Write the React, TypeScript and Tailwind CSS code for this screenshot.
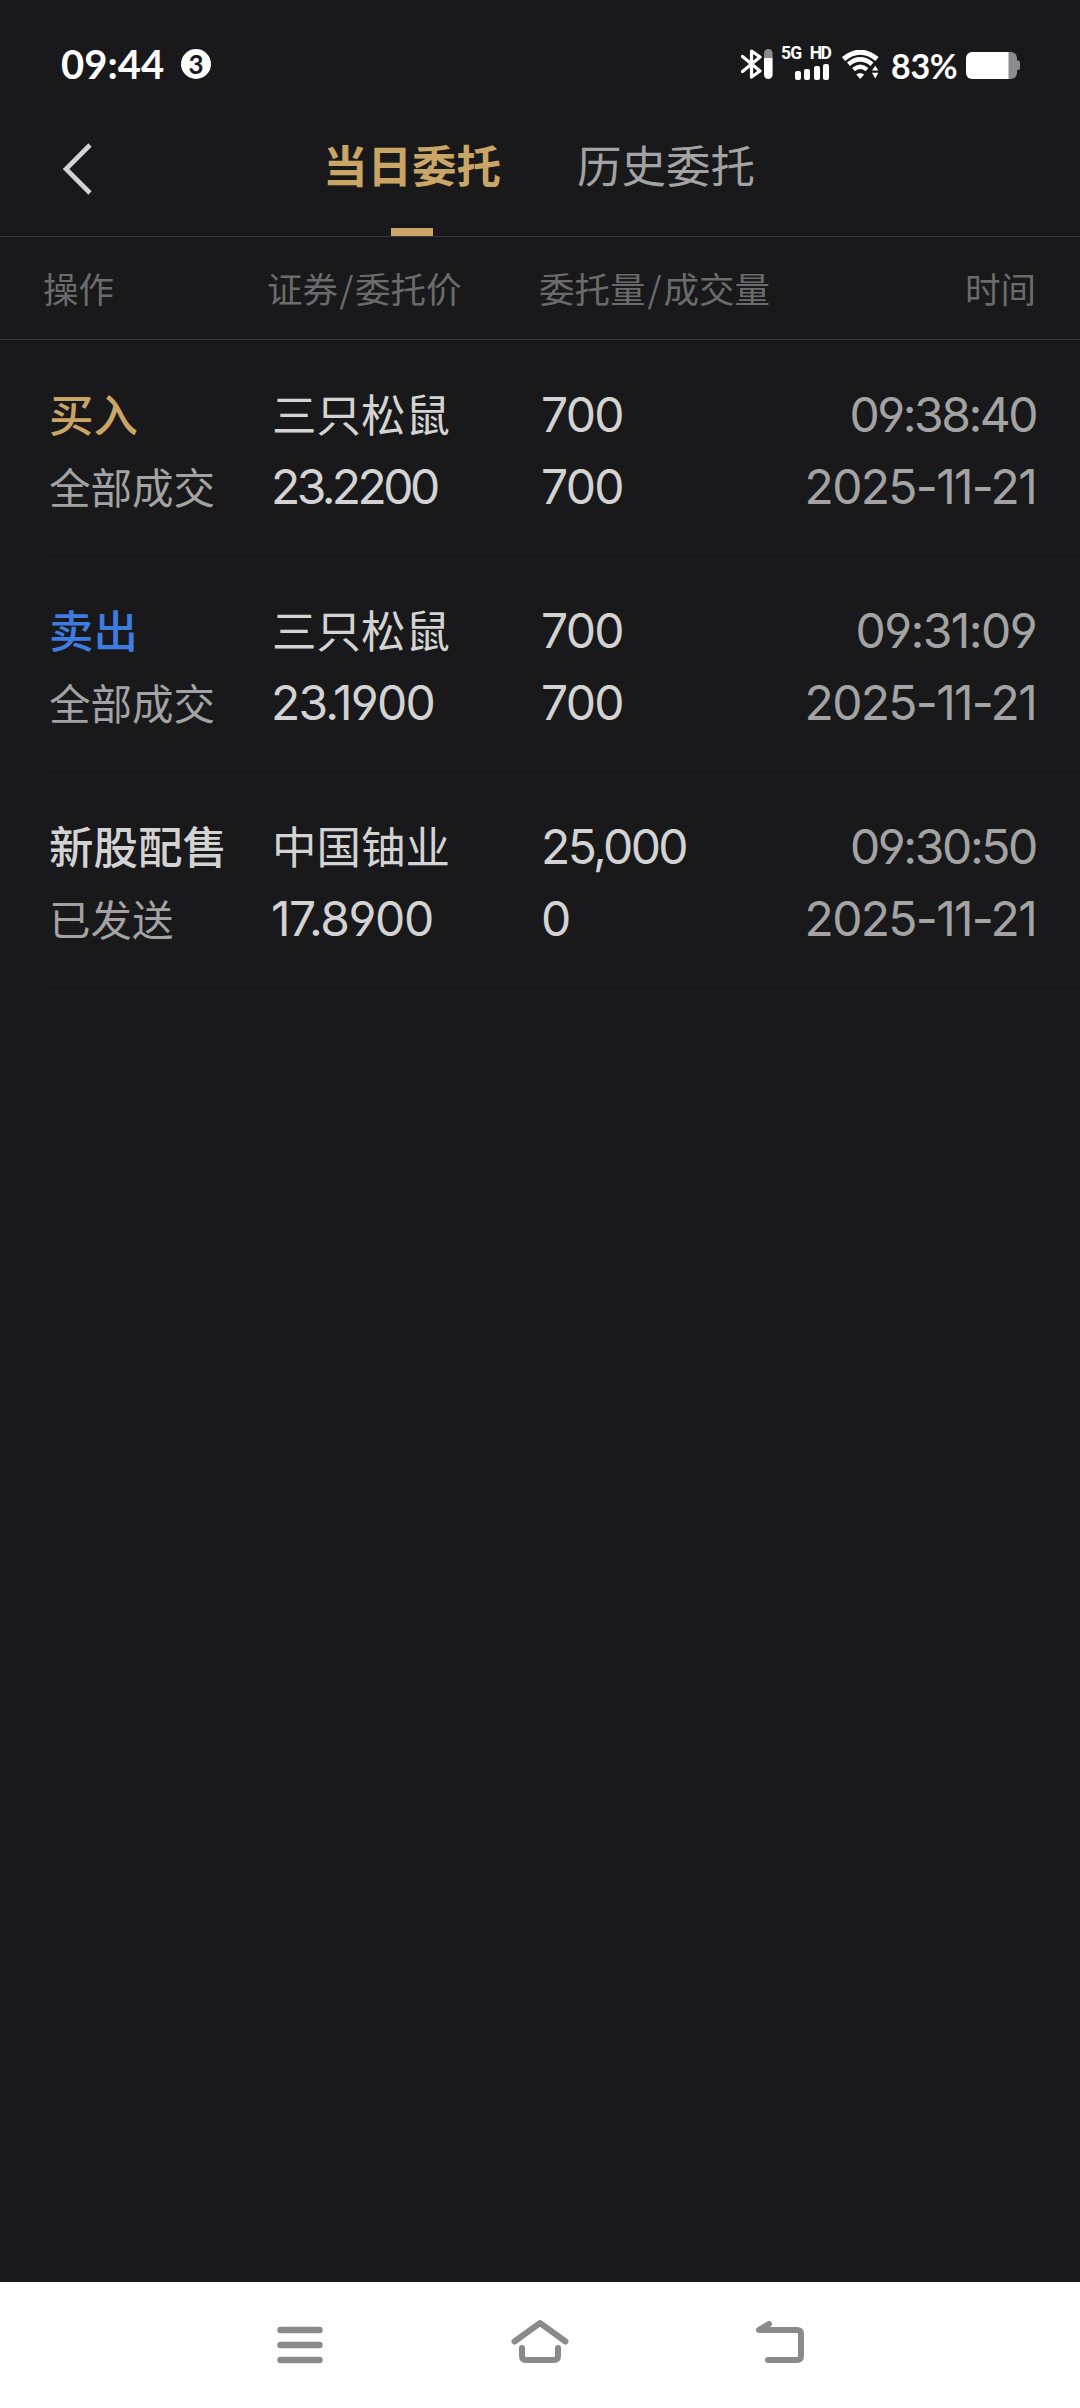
import clsx from "clsx";

interface Order {
  action: string;
  actionClass: string;
  status: string;
  name: string;
  price: string;
  priceClass: string;
  amount: string;
  amountClass: string;
  filled: string;
  time: string;
  timeClass: string;
  date: string;
}

const orders: Order[] = [
  {
    action: "买入",
    actionClass: "text-[#c9a566]",
    status: "全部成交",
    name: "三只松鼠",
    price: "23.2200",
    priceClass: "tracking-[-3.6px]",
    amount: "700",
    amountClass: "tracking-[-1.7px]",
    filled: "700",
    time: "09:38:40",
    timeClass: "tracking-[-2.5px]",
    date: "2025-11-21",
  },
  {
    action: "卖出",
    actionClass: "text-[#3f7ce0]",
    status: "全部成交",
    name: "三只松鼠",
    price: "23.1900",
    priceClass: "tracking-[-1.8px]",
    amount: "700",
    amountClass: "tracking-[-1.7px]",
    filled: "700",
    time: "09:31:09",
    timeClass: "tracking-[-1.6px]",
    date: "2025-11-21",
  },
  {
    action: "新股配售",
    actionClass: "text-[#d3d3d3]",
    status: "已发送",
    name: "中国铀业",
    price: "17.8900",
    priceClass: "tracking-[-1.4px]",
    amount: "25,000",
    amountClass: "tracking-[-2.6px]",
    filled: "0",
    time: "09:30:50",
    timeClass: "tracking-[-2.4px]",
    date: "2025-11-21",
  },
];

const columns = "grid grid-cols-[223px_269px_1fr_260px]";
const digits = "font-['Inter',sans-serif] text-[48px] [font-feature-settings:'cv03','cv04']";

function StatusBar() {
  return (
    <div className="flex h-[126px] items-start pr-[60px] pl-[61px] font-['Lato',sans-serif] text-white">
      <span className="mt-11 h-10 w-[120px] text-[40px] leading-10 font-bold">09:44</span>
      <span className="mt-[49px] flex size-[30px] items-center justify-center rounded-full bg-white text-[26px] leading-[30px] font-bold text-[#19191b]">
        3
      </span>

      <div className="ml-auto flex h-[126px] items-start">
        {/* Bluetooth with the headset's charge */}
        <svg className="mt-[49px]" width="34" height="30" viewBox="0 0 34 30" fill="none">
          <path
            d="M1.500 7.500 L19 22 L10.500 28 V2 L19 8 L1.500 22.500"
            stroke="white"
            strokeWidth="3.2"
            strokeLinecap="round"
            strokeLinejoin="round"
          />
          <path d="M23 9 V4.300 a4.300 4.300 0 0 1 8.600 0 V9 Z" fill="#8c8c8d" />
          <path d="M23 9 H31.600 V25.700 a4.300 4.300 0 0 1 -8.600 0 Z" fill="white" />
        </svg>

        {/* Mobile signal */}
        <div className="mt-[46px] ml-[6px] w-[51px] font-['Roboto',sans-serif]">
          <div className="flex h-[14px] justify-between pr-[2px] text-[17.5px] leading-[14px] font-bold">
            <span className="tracking-[-0.8px]">5G</span>
            <span className="tracking-[-1.8px]">HD</span>
          </div>
          <div className="flex h-5 items-end justify-end gap-[3.5px] pr-[3px]">
            <span className="h-[9px] w-[6px] rounded-xs bg-white" />
            <span className="h-[11px] w-[6px] rounded-xs bg-white" />
            <span className="h-[14px] w-[6px] rounded-xs bg-white" />
            <span className="h-4 w-[6px] rounded-xs bg-white" />
          </div>
        </div>

        {/* Wi-Fi */}
        <svg className="mt-[50px] ml-[10px]" width="38" height="30" viewBox="0 0 38 30" fill="none">
          <path d="M1.500 9 Q18.200 -4.600 35 9" stroke="white" strokeWidth="5" />
          <path d="M6.500 14.200 Q18.200 4.600 30 14.200" stroke="white" strokeWidth="4.600" />
          <path d="M11.500 19.700 Q18.200 13.800 25 19.700" stroke="white" strokeWidth="4.400" />
          <path d="M14.200 24.600 Q18.200 21.400 22.200 24.600 L18.200 29 Z" fill="white" />
          <path d="M33.200 13 L38.500 22 L33.200 31 L27.800 22 Z" fill="#19191b" />
          <path d="M30 20.600 L33.200 15.800 L36.400 20.600 Z M30 22.800 H36.400 L33.200 28.400 Z" fill="white" />
        </svg>

        <span className="mt-[49px] ml-[11px] h-[34px] w-[75px] text-[34px] leading-[34px] font-bold tracking-[-0.3px]">
          83%
        </span>

        <svg className="mt-[52px]" width="54" height="27" viewBox="0 0 54 27">
          <path d="M42 0 H45 a6 6 0 0 1 6 6 V8.500 H52 a2 2 0 0 1 2 2 V16 a2 2 0 0 1 -2 2 H51 V21 a6 6 0 0 1 -6 6 H42 Z" fill="#8c8c8d" />
          <path d="M6 0 H42.500 V27 H6 a6 6 0 0 1 -6 -6 V6 a6 6 0 0 1 6 -6 Z" fill="white" />
        </svg>
      </div>
    </div>
  );
}

function TabBar() {
  return (
    <div className="flex h-[111px] border-b border-[#38383a]">
      <button className="flex w-[322px] items-start pt-[17px] pl-[62px]" aria-label="返回">
        <svg width="30" height="52" viewBox="0 0 30 52" fill="none">
          <path d="M28 2 L4 26 L28 50" stroke="#d3d3d5" strokeWidth="4.6" />
        </svg>
      </button>
      <div className="flex gap-[75px] text-[44.5px] leading-[76px]">
        <div className="flex w-[180px] flex-col items-center justify-between font-bold text-[#c9a566]">
          <span>当日委托</span>
          <span className="h-2 w-[42px] bg-[#c9a566]" />
        </div>
        <div className="text-[#a3a3a3]">历史委托</div>
      </div>
    </div>
  );
}

function OrderRow({ order }: { order: Order }) {
  return (
    <div className="ml-[42px] h-[216px] border-b border-[#121214] pt-[39px] pr-[44px] pl-[7px]">
      <div className={clsx(columns, "h-[72px] text-[44.5px] leading-[67px] text-[#d3d3d3]")}>
        <span className={clsx("font-medium whitespace-nowrap", order.actionClass)}>{order.action}</span>
        <span>{order.name}</span>
        <span className={clsx(digits, "leading-[72px]", order.amountClass)}>{order.amount}</span>
        <span className={clsx(digits, "text-right leading-[72px] text-[#a3a3a3]", order.timeClass)}>{order.time}</span>
      </div>
      <div className={clsx(columns, "h-[72px] leading-[71px] text-[#d3d3d3]")}>
        <span className="text-[41.5px] leading-[70px] text-[#a3a3a3]">{order.status}</span>
        <span className={clsx(digits, "-ml-px", order.priceClass)}>{order.price}</span>
        <span className={clsx(digits, "tracking-[-1.7px]")}>{order.filled}</span>
        <span className={clsx(digits, "text-right tracking-[-1.7px] text-[#a3a3a3]")}>{order.date}</span>
      </div>
    </div>
  );
}

function NavBar() {
  return (
    <div className="flex h-[126px] items-start justify-between bg-white px-[275px] pt-[37px]">
      <svg width="50" height="46" viewBox="0 0 50 46" fill="none" stroke="#8a8a8a" strokeWidth="6.4" strokeLinecap="round">
        <path d="M5.5 11 H44.5 M5.5 26 H44.5 M5.5 41 H44.5" />
      </svg>
      <svg width="60" height="46" viewBox="0 0 60 46" fill="none" stroke="#8a8a8a" strokeWidth="6" strokeLinecap="round" strokeLinejoin="round">
        <path d="M4.500 22.500 L30 4 L55.500 22.500" />
        <path d="M12 29 V37 Q12 41 16 41 H44 Q48 41 48 37 V29" />
      </svg>
      <svg width="50" height="46" viewBox="0 0 50 46" fill="none" stroke="#8a8a8a" strokeWidth="6" strokeLinecap="round" strokeLinejoin="round">
        <path d="M14 5 L4 11 H42 Q46 11 46 15 V37 Q46 41 42 41 H13" />
      </svg>
    </div>
  );
}

export default function App() {
  return (
    <div className="flex h-[2408px] w-[1080px] flex-col bg-[#19191b] font-['Noto_Sans_CJK_SC',sans-serif]">
      <StatusBar />
      <TabBar />
      <div className="grid h-[103px] grid-cols-[224px_272px_1fr_200px] border-b border-[#38383a] pr-[44px] pl-[43px] text-[35.5px] leading-[101px] text-[#6b6b6d]">
        <span>操作</span>
        <span>
          证券<span className="mx-[1.5px]">/</span>委托价
        </span>
        <span>
          委托量<span className="mx-[2px]">/</span>成交量
        </span>
        <span className="text-right">时间</span>
      </div>
      <main className="flex-1">
        {orders.map((order) => (
          <OrderRow key={order.time} order={order} />
        ))}
      </main>
      <NavBar />
    </div>
  );
}
